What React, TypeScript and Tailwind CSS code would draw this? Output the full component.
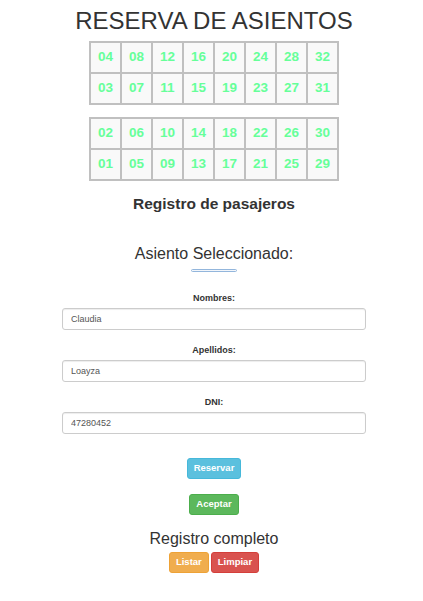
import React from "react";

const topRows = [
  ["04", "08", "12", "16", "20", "24", "28", "32"],
  ["03", "07", "11", "15", "19", "23", "27", "31"],
];
const bottomRows = [
  ["02", "06", "10", "14", "18", "22", "26", "30"],
  ["01", "05", "09", "13", "17", "21", "25", "29"],
];

const fields = [
  { label: "Nombres:", value: "Claudia" },
  { label: "Apellidos:", value: "Loayza" },
  { label: "DNI:", value: "47280452" },
];

const SeatGrid = ({ rows, className }: { rows: string[][]; className?: string }) => (
  <div className={`mx-auto grid w-fit grid-cols-8 gap-[2px] bg-[#c0c0c0] p-[2px] ${className ?? ""}`}>
    {rows.flat().map((n) => (
      <div
        key={n}
        className="flex h-[29px] w-[29px] items-center justify-center bg-[#f9f9f9] text-[13.5px] font-bold text-[#66ff99]"
      >
        {n}
      </div>
    ))}
  </div>
);

export default function App() {
  return (
    <div className="w-[423px] bg-white pl-[5px] text-center font-['Liberation_Sans',Arial,sans-serif] text-[#333]">
      <h1 className="pt-[9px] text-[24px] leading-[24px]">RESERVA DE ASIENTOS</h1>

      <SeatGrid rows={topRows} className="mt-[8px]" />
      <SeatGrid rows={bottomRows} className="mt-[12px]" />

      <h3 className="mt-[13px] text-[15.5px] font-bold leading-[20px]">Registro de pasajeros</h3>

      <h4 className="mt-[30px] text-[16px] leading-[20px]">Asiento Seleccionado:</h4>
      <div className="mx-auto mt-[5px] h-[3px] w-[46px] rounded-sm border border-[#93b6dc] bg-[#f2f6fb]" />

      <form className="mt-[20px] flex flex-col items-center">
        {fields.map(({ label, value }, i) => (
          <div key={label} className={i > 0 ? "mt-[14px]" : ""}>
            <label className="block text-[9px] font-bold leading-[12px]">{label}</label>
            <input
              readOnly
              value={value}
              className="mt-[4px] block h-[22px] w-[304px] rounded-[3px] border border-[#ccc] px-[8px] text-[9px] text-[#555] shadow-[inset_0_1px_1px_rgba(0,0,0,0.075)] outline-none"
            />
          </div>
        ))}
      </form>

      <div className="mt-[24px] flex flex-col items-center">
        <button className="h-[21px] rounded-[3px] border border-[#46b8da] bg-[#5bc0de] px-[6px] text-[9.5px] font-bold text-white">
          Reservar
        </button>
        <button className="mt-[15px] h-[21px] rounded-[3px] border border-[#4cae4c] bg-[#5cb85c] px-[6px] text-[9.5px] font-bold text-white">
          Aceptar
        </button>
      </div>

      <h4 className="mt-[14px] text-[16px] leading-[20px]">Registro completo</h4>
      <div className="mt-[3px] flex justify-center gap-[2px] pb-[20px]">
        <button className="h-[21px] rounded-[3px] border border-[#eea236] bg-[#f0ad4e] px-[6px] text-[9.5px] font-bold text-white">
          Listar
        </button>
        <button className="h-[21px] rounded-[3px] border border-[#d43f3a] bg-[#d9534f] px-[6px] text-[9.5px] font-bold text-white">
          Limpiar
        </button>
      </div>
    </div>
  );
}
